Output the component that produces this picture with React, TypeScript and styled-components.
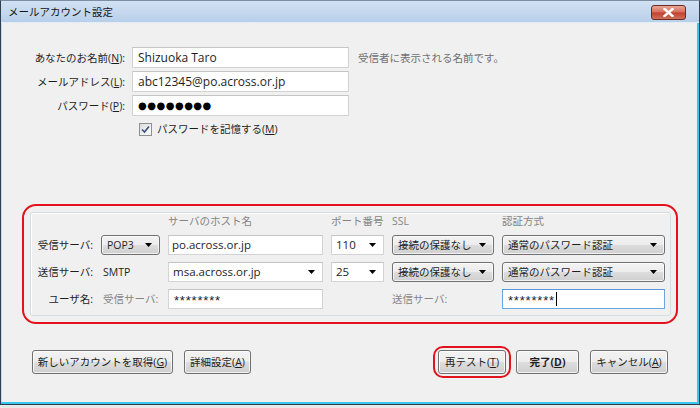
import React from "react";
import styled, { createGlobalStyle } from "styled-components";

const GlobalStyle = createGlobalStyle`
  body {
    margin: 0;
    background: #e9e9e9;
    font-family: "Open Sans", "Noto Sans CJK JP", sans-serif;
    font-size: 10.5px;
    line-height: 14px;
    color: #1e1e1e;
  }
`;

const Window = styled.div`
  width: 700px;
  height: 405px;
  box-sizing: border-box;
  border: 1px solid #2f3f50;
  border-top-color: #7b8ea2;
  display: flex;
  flex-direction: column;
  background: #f0f0f0;
`;

const TitleBar = styled.div`
  height: 21px;
  flex: none;
  display: flex;
  align-items: center;
  justify-content: space-between;
  padding: 0 13px 0 7px;
  background: linear-gradient(#d2e1f2, #b8cfea);
  border-bottom: 1px solid #e4edf7;
`;

const Title = styled.span`
  font-size: 10.5px;
  color: #151515;
  font-family: "Noto Sans CJK JP", sans-serif;
`;

const CloseButton = styled.div`
  width: 35px;
  height: 15px;
  box-sizing: border-box;
  border: 1px solid #6e2a20;
  border-radius: 3px;
  display: flex;
  align-items: center;
  justify-content: center;
  background: linear-gradient(#e8a898, #d66b5a 48%, #c0402f 52%, #d0705a);
  margin-top: 2px;
`;

const Body = styled.div`
  flex: 1;
  display: flex;
  flex-direction: column;
  padding-top: 24px;
  box-shadow: inset -2px -2px 0 #39c6ec, inset 1px 0 0 #c8d9ec;
`;

const Form = styled.div`
  display: grid;
  grid-template-columns: 124px 217px auto;
  column-gap: 7px;
  row-gap: 3px;
  align-items: center;
`;

const Label = styled.div<{ $muted?: boolean }>`
  text-align: right;
  white-space: nowrap;
  color: ${(p) => (p.$muted ? "#858585" : "#1e1e1e")};
`;

const Hint = styled.div`
  color: #6f6f6f;
  margin-left: 2px;
  white-space: nowrap;
`;

const Field = styled.div<{ $focused?: boolean; $small?: boolean }>`
  height: ${(p) => (p.$small ? 20 : 21)}px;
  box-sizing: border-box;
  border: 1px solid ${(p) => (p.$focused ? "#6aa6e2" : "#d3d3d3")};
  border-top-color: ${(p) => (p.$focused ? "#5b97d6" : "#c4c4c4")};
  background: #fff;
  display: flex;
  align-items: center;
  padding: 0 ${(p) => (p.$small ? 3 : 5)}px;
  white-space: nowrap;
  font-size: ${(p) => (p.$small ? 11.5 : 12)}px;
`;

const Dots = styled.span`
  font-family: "DejaVu Sans", sans-serif;
  font-size: 10px;
  letter-spacing: 0.5px;
  color: #000;
`;

const Stars = styled.span`
  font-family: "Liberation Sans", sans-serif;
  font-size: 13px;
  letter-spacing: 0.8px;
  padding: 4px 0 0 2px;
`;

const Caret = styled.span`
  display: inline-block;
  width: 1px;
  height: 14px;
  background: #000;
  margin-left: 1px;
`;

const CheckRow = styled.label`
  grid-column: 2 / 4;
  display: flex;
  align-items: center;
  gap: 5px;
  margin: 3px 0 0 7px;
  white-space: nowrap;
`;

const CheckBox = styled.span`
  width: 13px;
  height: 13px;
  box-sizing: border-box;
  border: 1px solid #8e8f8f;
  background: linear-gradient(135deg, #dcdcdc, #fff);
  display: flex;
  align-items: center;
  justify-content: center;
`;

const Outline = styled.div`
  margin: 68px 21px 0 21px;
  border: 2px solid #e3131c;
  border-radius: 14px;
  padding: 6px 5px 6px 6px;
`;

const GroupBox = styled.div`
  border: 1px solid #d5dce2;
  border-radius: 3px;
  box-shadow: inset 1px 1px 0 #fff;
  padding: 1px 5px 6px 0;
  display: grid;
  grid-template-columns: 62px 59px 155px 53px 102px 163px;
  grid-template-rows: 14px 20px 20px 20px;
  column-gap: 8px;
  row-gap: 7px;
  align-items: center;
`;

const Head = styled.div`
  color: #858585;
  white-space: nowrap;
`;

const Plain = styled.div<{ $muted?: boolean; $indent?: number }>`
  padding-left: ${(p) => p.$indent ?? 2}px;
  white-space: nowrap;
  color: ${(p) => (p.$muted ? "#858585" : "#1e1e1e")};
`;

const SelectBox = styled.div`
  height: 20px;
  box-sizing: border-box;
  border: 1px solid #707070;
  border-radius: 3px;
  background: linear-gradient(#f3f3f3, #ececec 50%, #dddddd 51%, #cfcfcf);
  box-shadow: inset 0 0 0 1px rgba(255, 255, 255, 0.7);
  display: flex;
  align-items: center;
  justify-content: space-between;
  padding: 0 7px 0 5px;
  white-space: nowrap;
`;

const ComboBox = styled(Field)`
  justify-content: space-between;
  padding: 0 7px 0 4px;
`;

const Arrow = () => (
  <svg width="7" height="4" viewBox="0 0 7 4">
    <path d="M0 0h7L3.5 4z" fill="#000" />
  </svg>
);

const ButtonBar = styled.div`
  display: flex;
  align-items: center;
  gap: 11px;
  margin-top: 22px;
  padding: 0 31px;
`;

const Button = styled.div<{ $bold?: boolean; $width: number }>`
  width: ${(p) => p.$width}px;
  height: 24px;
  box-sizing: border-box;
  border: 1px solid #707070;
  border-radius: 3px;
  background: linear-gradient(#f3f3f3, #ececec 50%, #dddddd 51%, #cfcfcf);
  box-shadow: inset 0 0 0 1px rgba(255, 255, 255, 0.75);
  display: flex;
  align-items: center;
  justify-content: center;
  white-space: nowrap;
  font-weight: ${(p) => (p.$bold ? 700 : 400)};
`;

const Highlight = styled.div`
  border: 2px solid #e3131c;
  border-radius: 10px;
  padding: 2px 3px;
  margin-right: -6px;
`;

const Spacer = styled.div`
  flex: 1;
`;

export default function App() {
  return (
    <>
      <GlobalStyle />
      <Window>
        <TitleBar>
          <Title>メールアカウント設定</Title>
          <CloseButton>
            <svg width="11" height="9" viewBox="0 0 11 9">
              <path
                d="M1.5 1l8 7M9.5 1l-8 7"
                stroke="#fff"
                strokeWidth="2.4"
                strokeLinecap="square"
              />
            </svg>
          </CloseButton>
        </TitleBar>
        <Body>
          <Form>
            <Label>
              あなたのお名前(<u>N</u>):
            </Label>
            <Field>Shizuoka Taro</Field>
            <Hint>受信者に表示される名前です。</Hint>
            <Label>
              メールアドレス(<u>L</u>):
            </Label>
            <Field>abc12345@po.across.or.jp</Field>
            <span />
            <Label>
              パスワード(<u>P</u>):
            </Label>
            <Field>
              <Dots>●●●●●●●●</Dots>
            </Field>
            <span />
            <CheckRow>
              <CheckBox>
                <svg width="9" height="9" viewBox="0 0 9 9">
                  <path
                    d="M1 4.5l2.5 2.5L8 1.5"
                    stroke="#3c4f7c"
                    strokeWidth="1.6"
                    fill="none"
                  />
                </svg>
              </CheckBox>
              <span>
                パスワードを記憶する(<u>M</u>)
              </span>
            </CheckRow>
          </Form>

          <Outline>
            <GroupBox>
              <span />
              <span />
              <Head>サーバのホスト名</Head>
              <Head>ポート番号</Head>
              <Head>SSL</Head>
              <Head>認証方式</Head>

              <Label>受信サーバ:</Label>
              <SelectBox>
                POP3
                <Arrow />
              </SelectBox>
              <Field $small>po.across.or.jp</Field>
              <ComboBox $small>
                110
                <Arrow />
              </ComboBox>
              <SelectBox>
                接続の保護なし
                <Arrow />
              </SelectBox>
              <SelectBox>
                通常のパスワード認証
                <Arrow />
              </SelectBox>

              <Label>送信サーバ:</Label>
              <Plain>SMTP</Plain>
              <ComboBox $small>
                msa.across.or.jp
                <Arrow />
              </ComboBox>
              <ComboBox $small>
                25
                <Arrow />
              </ComboBox>
              <SelectBox>
                接続の保護なし
                <Arrow />
              </SelectBox>
              <SelectBox>
                通常のパスワード認証
                <Arrow />
              </SelectBox>

              <Label>ユーザ名:</Label>
              <Plain $muted>受信サーバ:</Plain>
              <Field $small>
                <Stars>********</Stars>
              </Field>
              <span />
              <Plain $muted $indent={0}>
                送信サーバ:
              </Plain>
              <Field $focused $small>
                <Stars>********</Stars>
                <Caret />
              </Field>
            </GroupBox>
          </Outline>

          <ButtonBar>
            <Button $width={141}>
              新しいアカウントを取得(<u>G</u>)
            </Button>
            <Button $width={67}>
              詳細設定(<u>A</u>)
            </Button>
            <Spacer />
            <Highlight>
              <Button $width={68}>
                再テスト(<u>T</u>)
              </Button>
            </Highlight>
            <Button $width={63} $bold>
              完了(<u>D</u>)
            </Button>
            <Button $width={78}>
              キャンセル(<u>A</u>)
            </Button>
          </ButtonBar>
        </Body>
      </Window>
    </>
  );
}
